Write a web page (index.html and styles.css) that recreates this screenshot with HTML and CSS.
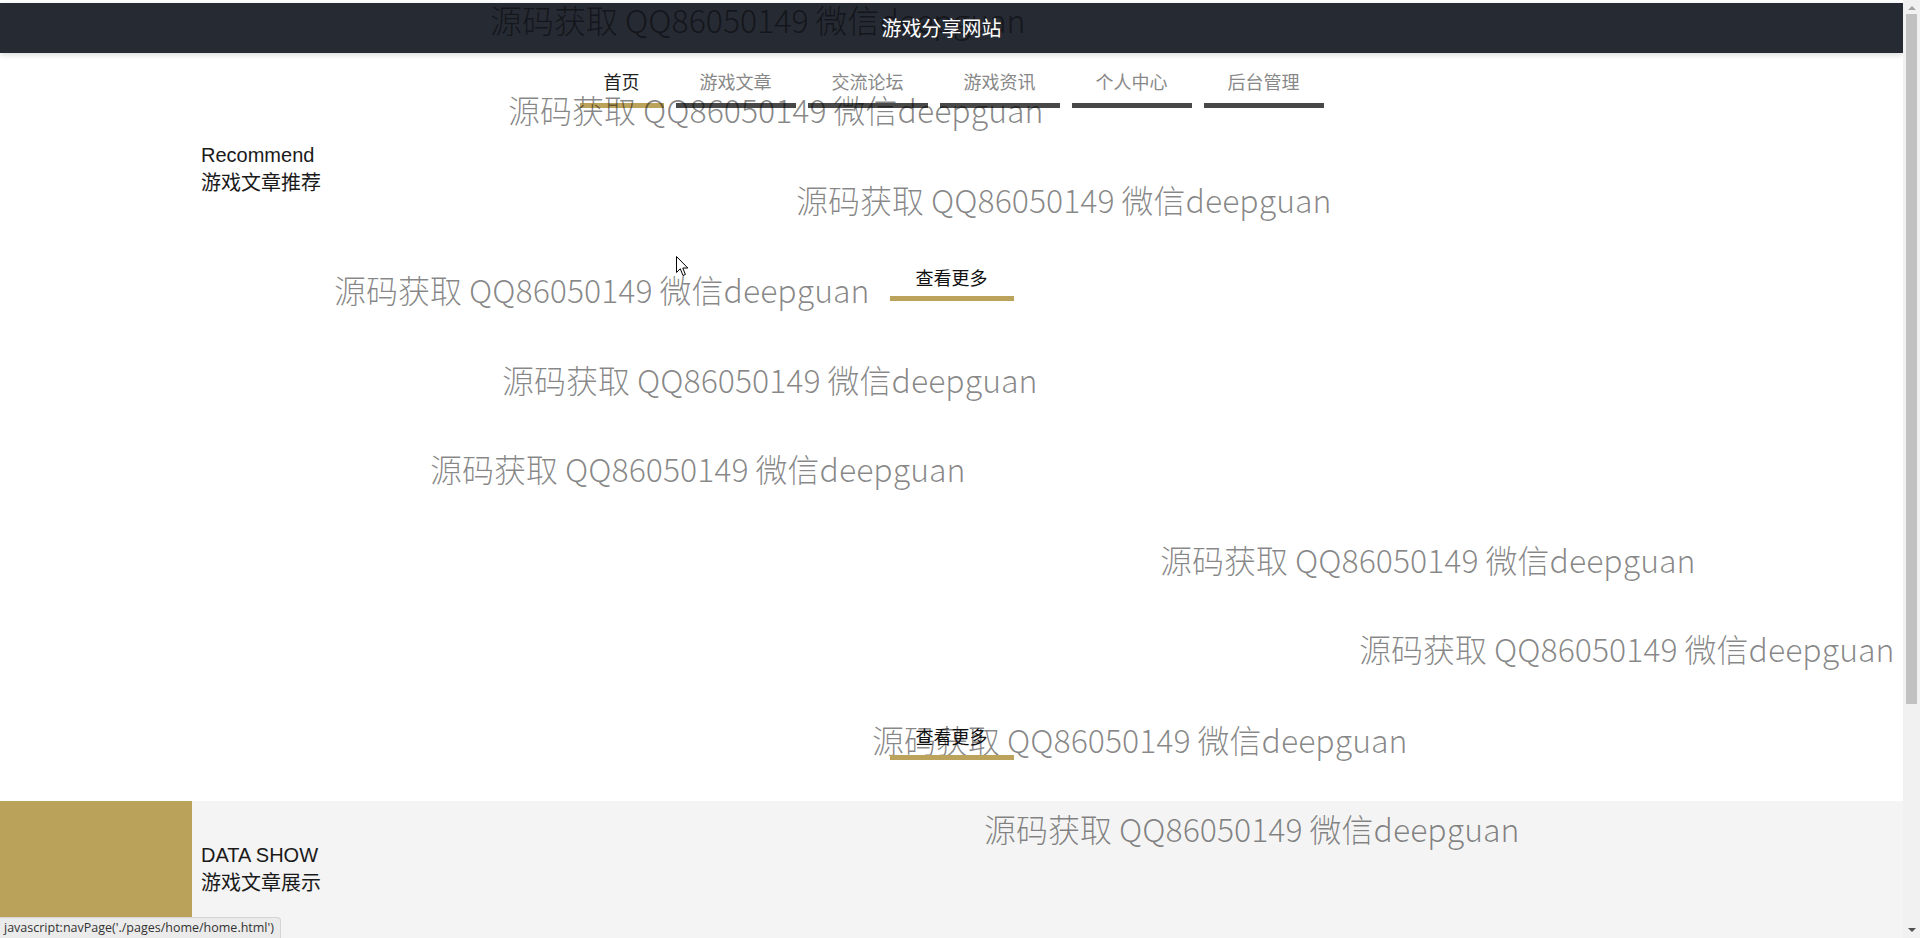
FILE: index.html
```html
<!DOCTYPE html>
<html lang="zh-CN">

<head>
    <meta charset="UTF-8">
    <meta name="viewport" content="width=device-width, initial-scale=1.0">
    <title>游戏分享网站</title>
    <link rel="stylesheet" href="styles.css">
</head>

<body>
    <div class="page">
        <header class="topbar">
            <span class="site-title">游戏分享网站</span>
        </header>

        <nav class="menu">
            <a href="#" class="active">首页</a>
            <a href="#">游戏文章</a>
            <a href="#">交流论坛</a>
            <a href="#">游戏资讯</a>
            <a href="#">个人中心</a>
            <a href="#">后台管理</a>
        </nav>

        <section class="recommend">
            <div class="sec-title">
                <p>Recommend</p>
                <p>游戏文章推荐</p>
            </div>
            <a href="#" class="more">查看更多</a>
            <div class="article-list"></div>
            <a href="#" class="more">查看更多</a>
        </section>

        <section class="show">
            <div class="show-block"></div>
            <div class="sec-title">
                <p>DATA SHOW</p>
                <p>游戏文章展示</p>
            </div>
        </section>

        <!-- watermark layer -->
        <div class="watermarks">
            <span class="wm w1">源码获取 QQ86050149 微信deepguan</span>
            <span class="wm w2">源码获取 QQ86050149 微信deepguan</span>
            <span class="wm w3">源码获取 QQ86050149 微信deepguan</span>
            <span class="wm w4">源码获取 QQ86050149 微信deepguan</span>
            <span class="wm w5">源码获取 QQ86050149 微信deepguan</span>
            <span class="wm w6">源码获取 QQ86050149 微信deepguan</span>
            <span class="wm w7">源码获取 QQ86050149 微信deepguan</span>
            <span class="wm w8">源码获取 QQ86050149 微信deepguan</span>
            <span class="wm w9">源码获取 QQ86050149 微信deepguan</span>
            <span class="wm w10">源码获取 QQ86050149 微信deepguan</span>
        </div>

        <svg class="cursor" width="13" height="21" viewBox="0 0 13 21">
            <path d="M0.5 0.5 L0.5 16.5 L4.3 12.8 L7 19.5 L9.4 18.5 L6.8 12 L11.8 12 Z" fill="#fff" stroke="#000" stroke-width="1"/>
        </svg>

        <div class="statusbar">javascript:navPage('./pages/home/home.html')</div>
    </div>

    <div class="scrollbar">
        <span class="arrow up"></span>
        <div class="thumb"></div>
        <span class="arrow down"></span>
    </div>
</body>

</html>
```

FILE: styles.css
```css
body {
    margin: 0;
    padding: 0;
    height: 938px;
    overflow: hidden;
    display: flex;
    background: #fff;
    font-family: "Noto Sans CJK SC", "Liberation Sans", sans-serif;
}

p {
    margin: 0;
}

.page {
    flex: 1;
    position: relative;
    display: flex;
    flex-direction: column;
    padding-top: 3px;
    overflow: hidden;
}

.topbar {
    height: 50px;
    line-height: 50px;
    background: #262a33;
    color: #fff;
    text-align: center;
    padding-right: 20px;
    font-size: 20px;
    box-shadow: 0 2px 6px rgba(0, 0, 0, 0.15);
}

.site-title {
    position: relative;
    z-index: 3;
}

.menu {
    display: flex;
    justify-content: center;
    gap: 12px;
    padding-top: 10px;
}

.menu a {
    padding: 0 24px 4px;
    line-height: 36px;
    font-size: 18px;
    color: #888;
    text-decoration: none;
    border-bottom: 5px solid #484848;
}

.menu a.active {
    color: #222;
    border-bottom-color: #bca35c;
}

.recommend {
    display: flex;
    flex-direction: column;
}

.sec-title {
    font-family: "Liberation Sans", "Noto Sans CJK SC", sans-serif;
    font-size: 20px;
    line-height: 28px;
    color: #1a1a1a;
}

.recommend .sec-title {
    margin-top: 33px;
    padding-left: 201px;
}

.more {
    align-self: center;
    margin-top: 61px;
    width: 124px;
    line-height: 38px;
    font-size: 18px;
    text-align: center;
    color: #111;
    text-decoration: none;
    border-bottom: 5px solid #bca35c;
    position: relative;
    z-index: 3;
}

.article-list {
    height: 416px;
}

.article-list + .more {
    margin-top: 0;
}

.show {
    flex: 1;
    margin-top: 41px;
    display: flex;
    background: #f4f4f4;
}

.show-block {
    width: 192px;
    background: #bba25b;
}

.show .sec-title {
    padding-left: 9px;
    padding-top: 40px;
}

.watermarks {
    position: absolute;
    inset: 0;
    pointer-events: none;
    z-index: 2;
}

.wm {
    position: absolute;
    white-space: nowrap;
    font-size: 32px;
    line-height: 40px;
    color: rgba(0, 0, 0, 0.47);
    font-weight: 300;
}

.w1 { left: 490px; top: -1px; }
.w2 { left: 508px; top: 89px; }
.w3 { left: 796px; top: 179px; }
.w4 { left: 334px; top: 269px; }
.w5 { left: 502px; top: 359px; }
.w6 { left: 430px; top: 448px; }
.w7 { left: 1160px; top: 539px; }
.w8 { left: 1359px; top: 628px; }
.w9 { left: 872px; top: 719px; }
.w10 { left: 984px; top: 808px; }

.cursor {
    position: absolute;
    left: 676px;
    top: 256px;
    z-index: 5;
}

.statusbar {
    position: absolute;
    left: 0;
    bottom: 0;
    z-index: 5;
    height: 20px;
    line-height: 20px;
    padding: 0 6px 0 4px;
    font-size: 12.5px;
    font-family: "Open Sans", "Liberation Sans", sans-serif;
    color: #333;
    background: #ebebeb;
    border: 1px solid #d4d4d4;
    border-left: none;
    border-bottom: none;
    border-top-right-radius: 4px;
}

.scrollbar {
    width: 17px;
    background: #f1f1f1;
    display: flex;
    flex-direction: column;
    align-items: center;
}

.scrollbar .thumb {
    width: 11px;
    height: 690px;
    margin-top: 4px;
    background: #c1c1c1;
}

.arrow {
    width: 0;
    height: 0;
    border-left: 4px solid transparent;
    border-right: 4px solid transparent;
}

.arrow.up {
    margin-top: 6px;
    border-bottom: 4px solid #a3a3a3;
}

.arrow.down {
    margin-top: auto;
    margin-bottom: 6px;
    border-top: 4px solid #505050;
}
```
